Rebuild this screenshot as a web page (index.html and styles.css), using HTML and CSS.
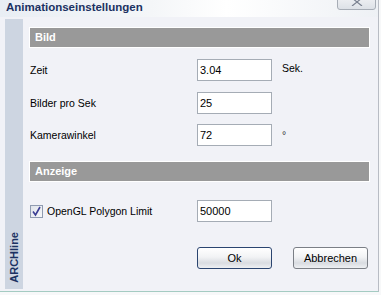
FILE: index.html
```html
<!DOCTYPE html>
<html lang="de">
<head>
    <meta charset="UTF-8">
    <title>Animationseinstellungen</title>
    <link rel="stylesheet" href="styles.css">
</head>
<body>
    <div class="fenster">
        <div class="titelleiste">
            <span class="titel">Animationseinstellungen</span>
            <span class="schliessen">
                <svg width="14" height="8" viewBox="0 0 14 8">
                    <path d="M2 0 L7 4 L12 0 M2 8 L7 4 L12 8" fill="none" stroke="#7a8190" stroke-width="1.2"/>
                </svg>
            </span>
        </div>

        <div class="inhalt">
            <div class="seitenleiste"><span>ARCHline</span></div>

            <div class="formular">
                <div class="abschnitt">Bild</div>

                <div class="zeile erste">
                    <label class="etikett">Zeit</label>
                    <input type="text" class="eingabe" value="3.04">
                    <span class="einheit">Sek.</span>
                </div>
                <div class="zeile">
                    <label class="etikett">Bilder pro Sek</label>
                    <input type="text" class="eingabe" value="25">
                </div>
                <div class="zeile letzte">
                    <label class="etikett">Kamerawinkel</label>
                    <input type="text" class="eingabe" value="72">
                    <span class="einheit grad">°</span>
                </div>

                <div class="abschnitt">Anzeige</div>

                <div class="zeile anzeige">
                    <label class="etikett">
                        <span class="kontrollkaestchen">
                            <svg width="11" height="11" viewBox="0 0 11 11">
                                <path d="M2 5.5 L4.5 9 L9 1" fill="none" stroke="#3b3e94" stroke-width="1.6"/>
                            </svg>
                        </span>
                        OpenGL Polygon Limit
                    </label>
                    <input type="text" class="eingabe" value="50000">
                </div>

                <div class="knopfleiste">
                    <button type="button" class="knopf standard">Ok</button>
                    <button type="button" class="knopf">Abbrechen</button>
                </div>
            </div>
        </div>
    </div>
</body>
</html>
```

FILE: styles.css
```css
:root {
    --hintergrund: #f1f2f7;
    --dunkelblau: #1b3162;
    --grau: #999999;
}

body {
    margin: 0;
    padding: 0;
    width: 381px;
    height: 295px;
    overflow: hidden;
    background-color: #f7f8f9;
    font-family: "Liberation Sans", Arial, sans-serif;
    font-size: 11px;
    color: #000;
}

.fenster {
    width: 378px;
    height: 291px;
    background-color: var(--hintergrund);
    border-right: 1px solid #b8bcc4;
    border-bottom: 1px solid #a4cbc2;
    display: flex;
    flex-direction: column;
}

.titelleiste {
    height: 17px;
    display: flex;
    justify-content: space-between;
    padding-left: 6px;
    background: linear-gradient(90deg, #e9eef4 0%, #f4f6f8 40%, #ffffff 60%, #eef1f5 100%);
}

.titel {
    font-weight: bold;
    font-size: 11.5px;
    color: var(--dunkelblau);
    line-height: 15px;
}

.schliessen {
    width: 39px;
    height: 18px;
    margin-top: -8px;
    margin-right: 2px;
    border: 1px solid #a7adb6;
    border-radius: 0 0 3px 3px;
    background: linear-gradient(#f6f7f9, #dde1e7);
    box-sizing: border-box;
    display: flex;
    justify-content: center;
    align-items: flex-end;
    padding-bottom: 3px;
}

.inhalt {
    flex: 1;
    display: flex;
    padding: 2px 0 2px 5px;
}

.seitenleiste {
    width: 18px;
    background-color: #cdd5e1;
    display: flex;
    flex-direction: column;
    justify-content: flex-end;
    align-items: center;
    padding-bottom: 6px;
    box-sizing: border-box;
}

.seitenleiste span {
    writing-mode: vertical-rl;
    transform: rotate(180deg);
    font-weight: bold;
    color: var(--dunkelblau);
    font-size: 11px;
}

.formular {
    width: 339px;
    margin-left: 7px;
    padding-top: 9px;
    display: flex;
    flex-direction: column;
}

.abschnitt {
    height: 19px;
    background-color: var(--grau);
    box-shadow: 0 0 0 1px #ffffff;
    color: #fff;
    font-weight: bold;
    line-height: 19px;
    padding-left: 5px;
}

.zeile {
    display: flex;
    align-items: center;
    height: 22px;
    margin-top: 11px;
}

.zeile.erste {
    margin-top: 12px;
}

.zeile.letzte {
    margin-top: 10px;
}

.zeile.anzeige {
    margin-top: 19px;
}

.zeile + .abschnitt {
    margin-top: 16px;
}

.etikett {
    width: 167px;
    display: flex;
    align-items: center;
    font-size: 10.5px;
}

.eingabe {
    width: 75px;
    height: 22px;
    box-sizing: border-box;
    border: 1px solid #a5acb5;
    background: #fff;
    padding: 0 2px;
    font-family: "Liberation Sans", Arial, sans-serif;
    font-size: 11px;
    color: #000;
}

.einheit {
    margin-left: 10px;
    align-self: flex-start;
    margin-top: 3px;
    font-size: 10.5px;
}

.einheit.grad {
    margin-top: 5px;
    color: #333;
}

.kontrollkaestchen {
    width: 13px;
    height: 13px;
    box-sizing: border-box;
    border: 1px solid #8f9bb0;
    background: linear-gradient(135deg, #dfe3ea, #f7f8fa);
    margin-right: 4px;
    display: flex;
    align-items: center;
    justify-content: center;
}

.knopfleiste {
    display: flex;
    justify-content: flex-end;
    gap: 21px;
    margin-top: 25px;
    padding-right: 1px;
}

.knopf {
    width: 75px;
    height: 22px;
    box-sizing: border-box;
    border: 1px solid #7b7f86;
    border-radius: 3px;
    background: linear-gradient(#ffffff 0%, #f2f3f5 45%, #d9dce1 75%, #eef0f3 100%);
    font-family: "Liberation Sans", Arial, sans-serif;
    font-size: 11px;
    color: #000;
    padding: 0;
}

.knopf.standard {
    border-color: #2b4570;
}
```
